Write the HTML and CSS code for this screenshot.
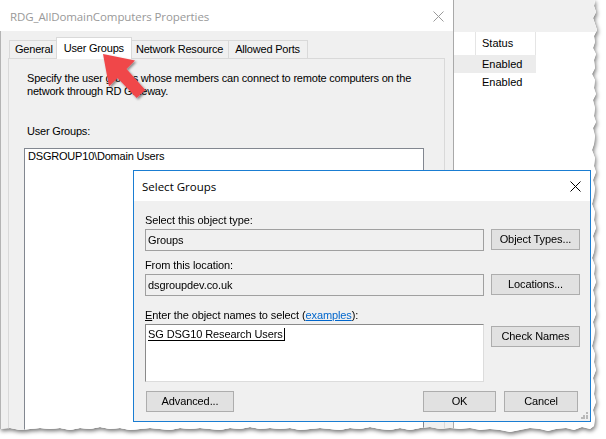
FILE: index.html
```html
<!DOCTYPE html>
<html>
<head>
<meta charset="utf-8">
<link rel="stylesheet" href="styles.css">
</head>
<body>
<div class="shot">
  <div class="canvas">
    <div class="backwin">
      <div class="bw-top"></div>
      <div class="bw-list">
        <div class="bw-row bw-header"><div class="bw-c0"></div><div class="bw-c1">Status</div></div>
        <div class="bw-row bw-sel"><div class="bw-c0"></div><div class="bw-c1">Enabled</div></div>
        <div class="bw-row"><div class="bw-c0 plain"></div><div class="bw-c1 plain">Enabled</div></div>
      </div>
    </div>

    <div class="props">
      <div class="titlebar">
        <span class="title">RDG_AllDomainComputers Properties</span>
        <svg class="close grey" width="11" height="11" viewBox="0 0 11 11"><path d="M0.5 0.5 L10.5 10.5 M10.5 0.5 L0.5 10.5" stroke="#9a9a9a" stroke-width="1"/></svg>
      </div>
      <div class="props-body">
        <div class="tabs">
          <div class="tab">General</div>
          <div class="tab active">User Groups</div>
          <div class="tab">Network Resource</div>
          <div class="tab last-tab">Allowed Ports</div>
        </div>
        <div class="panel">
          <p class="desc">Specify the user groups whose members can connect to remote computers on the<br>network through RD Gateway.</p>
          <div class="plabel">User Groups:</div>
          <div class="listbox"><div class="item">DSGROUP10\Domain Users</div></div>
        </div>
      </div>
    </div>

    <div class="dialog">
      <div class="dtitle">
        <span class="dtitle-text">Select Groups</span>
        <svg class="close" width="11" height="11" viewBox="0 0 11 11"><path d="M0.5 0.5 L10.5 10.5 M10.5 0.5 L0.5 10.5" stroke="#000" stroke-width="1"/></svg>
      </div>
      <div class="dbody">
        <div class="dlabel">Select this object type:</div>
        <div class="drow">
          <div class="tbox ro">Groups</div>
          <div class="btn wide">Object Types...</div>
        </div>
        <div class="dlabel">From this location:</div>
        <div class="drow second">
          <div class="tbox ro">dsgroupdev.co.uk</div>
          <div class="btn wide">Locations...</div>
        </div>
        <div class="dlabel"><u>E</u>nter the object names to select (<a class="link">examples</a>):</div>
        <div class="drow last">
          <div class="tbox multi"><span class="entry">SG DSG10 Research Users</span></div>
          <div class="btn wide check">Check Names</div>
        </div>
        <div class="dfooter">
          <div class="btn adv">Advanced...</div>
          <div class="spacer"></div>
          <div class="btn ok">OK</div>
          <div class="btn cancel">Cancel</div>
        </div>
        <svg class="grip" width="7" height="7" viewBox="0 0 7 7">
          <rect x="5" y="0" width="2" height="2" fill="#b8b8b8"/>
          <rect x="2" y="3" width="2" height="2" fill="#b8b8b8"/>
          <rect x="5" y="3" width="2" height="2" fill="#b8b8b8"/>
          <rect x="0" y="5" width="2" height="2" fill="#b8b8b8"/>
          <rect x="2" y="5" width="2" height="2" fill="#b8b8b8"/>
          <rect x="5" y="5" width="2" height="2" fill="#b8b8b8"/>
        </svg>
      </div>
    </div>

    <svg class="arrow" width="606" height="439" viewBox="0 0 606 439">
      <defs>
        <filter id="ash" x="-20%" y="-20%" width="160%" height="160%">
          <feDropShadow dx="1.5" dy="1.5" stdDeviation="1.2" flood-color="#000" flood-opacity="0.45"/>
        </filter>
      </defs>
      <polygon filter="url(#ash)" fill="#f0464a" points="103,54 135,60.5 126.5,69 145.3,89.9 136.7,98.1 117.5,78 109,86.5"/>
    </svg>
  </div>
</div>
</body>
</html>
```
FILE: styles.css
```css
* { box-sizing: border-box; }
html, body { margin: 0; padding: 0; background: #fff; }
body {
  font-family: "Liberation Sans", Arial, sans-serif;
  font-size: 11px;
  color: #000;
  width: 606px;
  height: 439px;
  overflow: hidden;
}
.shot {
  width: 606px;
  height: 439px;
  filter: drop-shadow(1px 2px 2px rgba(0,0,0,0.55));
}
.canvas {
  position: relative;
  width: 606px;
  height: 439px;
  background: #fff;
  overflow: hidden;
  clip-path: polygon(0 0, 595px 0, 594px 6px, 596px 12px, 593px 18px, 595px 24px, 597px 30px, 594px 36px, 595px 42px, 593px 48px, 596px 54px, 594px 60px, 595px 68px, 592px 74px, 595px 80px, 594px 88px, 596px 94px, 593px 100px, 595px 108px, 594px 116px, 596px 122px, 593px 128px, 595px 136px, 594px 144px, 592px 150px, 595px 158px, 594px 166px, 596px 172px, 593px 180px, 595px 188px, 594px 196px, 592px 204px, 595px 212px, 594px 220px, 596px 228px, 593px 236px, 595px 244px, 594px 252px, 592px 258px, 595px 266px, 594px 274px, 596px 282px, 593px 290px, 595px 298px, 594px 306px, 596px 314px, 593px 322px, 595px 330px, 594px 338px, 592px 346px, 595px 354px, 594px 362px, 596px 370px, 593px 378px, 595px 386px, 594px 394px, 596px 402px, 593px 410px, 595px 418px, 594px 426px, 590px 429px, 582px 427px, 574px 430px, 566px 428px, 556px 429px, 548px 431px, 540px 429px, 530px 428px, 520px 430px, 510px 432px, 500px 430px, 490px 429px, 480px 430px, 470px 428px, 460px 429px, 450px 428px, 440px 429px, 430px 427px, 420px 428px, 410px 430px, 400px 428px, 390px 430px, 380px 429px, 370px 427px, 360px 429px, 350px 428px, 340px 430px, 330px 429px, 320px 428px, 310px 429px, 300px 430px, 290px 428px, 280px 429px, 270px 428px, 260px 429px, 250px 427px, 240px 429px, 230px 428px, 220px 430px, 210px 429px, 200px 428px, 190px 429px, 180px 428px, 170px 430px, 160px 429px, 150px 428px, 140px 429px, 130px 430px, 120px 428px, 110px 429px, 100px 427px, 90px 429px, 80px 428px, 70px 430px, 60px 428px, 50px 429px, 40px 428px, 30px 429px, 20px 430px, 10px 428px, 0 429px);
}

/* window behind, on the right */
.backwin {
  position: absolute;
  left: 454px;
  top: 0;
  width: 152px;
  height: 439px;
  background: #fff;
}
.bw-top { height: 32px; background: #f0f0f0; }
.bw-row { display: flex; height: 18px; line-height: 18px; }
.bw-header { height: 23px; line-height: 23px; }
.bw-c0 { width: 22px; }
.bw-c1 { width: 60px; padding-left: 6px; }
.bw-header .bw-c0, .bw-header .bw-c1 { border-right: 1px solid #e5e5e5; }
.bw-sel .bw-c0, .bw-sel .bw-c1 { background: #ececec; }

/* properties window */
.props {
  position: absolute;
  left: 0;
  top: 0;
  width: 454px;
  height: 439px;
  border-right: 1px solid #a9a9a9;
  display: flex;
  flex-direction: column;
  background: #f0f0f0;
  overflow: hidden;
}
.titlebar {
  flex-shrink: 0;
  height: 31px;
  background: #fff;
  display: flex;
  align-items: center;
  justify-content: space-between;
  padding: 1px 9px 0 10px;
}
.title {
  font-family: "Open Sans", "Noto Sans", sans-serif;
  font-size: 11.5px;
  color: #999;
  letter-spacing: -0.1px;
}
.close { display: block; }
.props-body {
  flex: 1;
  min-height: 0;
  border-left: 1px solid #b4b4b4;
  padding: 6px 8px 0 7px;
  display: flex;
  flex-direction: column;
  letter-spacing: -0.2px;
}
.tabs {
  flex-shrink: 0;
  display: flex;
  align-items: flex-end;
  height: 21px;
  padding-left: 1px;
  position: relative;
  z-index: 2;
}
.tab {
  height: 18px;
  line-height: 17px;
  padding: 0 5px;
  border: 1px solid #d9d9d9;
  border-bottom: none;
  background: #f0f0f0;
  margin-right: -1px;
}
.tab.last-tab { padding: 0 7px 0 6px; }
.tab.active {
  height: 22px;
  line-height: 21px;
  padding: 0 7px;
  margin: 0 -2px -1px -2px;
  background: #fff;
  position: relative;
  z-index: 3;
}
.panel {
  flex: 1;
  min-height: 0;
  border: 1px solid #d9d9d9;
  border-bottom: none;
  background: #f0f0f0;
  padding: 13px 0 0 15px;
}
.desc {
  margin: 0;
  padding-left: 3px;
  line-height: 13px;
}
.plabel {
  margin-top: 27px;
  padding-left: 3px;
  line-height: 13px;
}
.listbox {
  margin-top: 10px;
  width: 400px;
  height: 300px;
  background: #fff;
  border: 1px solid #828790;
  padding: 1px 0 0 3px;
  line-height: 13px;
}

/* Select Groups dialog */
.dialog {
  position: absolute;
  left: 133px;
  top: 170px;
  width: 458px;
  height: 252px;
  border: 1px solid #1a7dd2;
  background: #f0f0f0;
  display: flex;
  flex-direction: column;
  z-index: 5;
  letter-spacing: -0.1px;
}
.dtitle {
  flex-shrink: 0;
  height: 30px;
  background: #fff;
  display: flex;
  align-items: center;
  justify-content: space-between;
  padding: 1px 9px 0 8px;
  letter-spacing: 0;
}
.dtitle-text {
  font-family: "Open Sans", "Noto Sans", sans-serif;
  font-size: 11.5px;
  color: #000;
}
.dbody {
  flex: 1;
  position: relative;
  padding: 12px 0 0 11px;
}
.dlabel { line-height: 14px; height: 14px; margin-bottom: 2px; }
.drow {
  display: flex;
  align-items: flex-start;
  gap: 7px;
  margin-bottom: 7px;
}
.drow.second { margin-bottom: 12px; }
.drow.last { margin-bottom: 9px; }
.tbox {
  width: 339px;
  height: 22px;
  line-height: 20px;
  padding-left: 2px;
  border: 1px solid #a0a0a0;
}
.tbox.ro { background: #f0f0f0; }
.tbox.multi {
  height: 58px;
  background: #fff;
  border-color: #8a8a8a #dcdcdc #dcdcdc #8a8a8a;
  line-height: 17px;
  padding-top: 1px;
}
.entry {
  border-bottom: 1px solid #000;
  border-right: 1px solid #000;
  padding-right: 1px;
}
.link { color: #0066cc; text-decoration: underline; }
.btn {
  height: 21px;
  line-height: 19px;
  text-align: center;
  background: #e1e1e1;
  border: 1px solid #adadad;
}
.btn.wide { width: 89px; }
.btn.check { margin-top: 2px; }
.dfooter {
  display: flex;
  padding-left: 1px;
  padding-right: 12px;
}
.spacer { flex: 1; }
.btn.adv { width: 88px; }
.btn.ok { width: 73px; margin-right: 8px; }
.btn.cancel { width: 74px; }
.grip { position: absolute; right: 2px; bottom: 2px; }

.arrow {
  position: absolute;
  left: 0;
  top: 0;
  z-index: 10;
  pointer-events: none;
}
```
